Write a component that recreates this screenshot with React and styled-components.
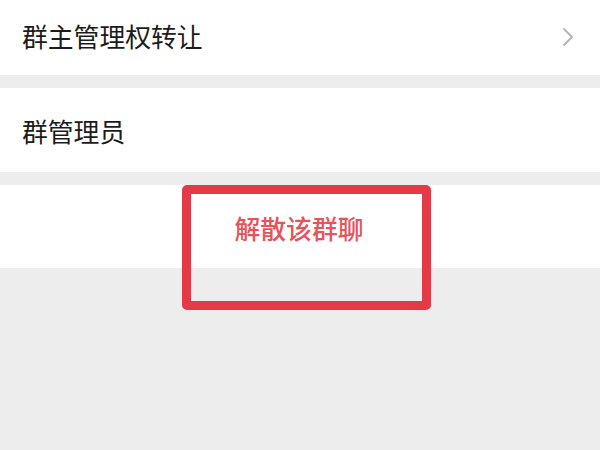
import React from "react";
import styled, { createGlobalStyle } from "styled-components";

const Global = createGlobalStyle`
  html, body { margin: 0; padding: 0; background: #ededed; }
  body { font-family: "Noto Sans CJK SC", "Noto Sans", sans-serif; }
`;

const Page = styled.div`
  position: relative;
  width: 600px;
  height: 450px;
  background: #ededed;
  display: flex;
  flex-direction: column;
  gap: 13px;
  overflow: hidden;
`;

const Row = styled.div`
  height: ${(p) => p.$h}px;
  background: #fff;
  display: flex;
  align-items: center;
  justify-content: ${(p) => (p.$center ? "center" : "space-between")};
  padding: 0 26px 0 22px;
  box-sizing: border-box;
`;

const Label = styled.span`
  font-size: 25.8px;
  color: #1b1b1b;
  line-height: 1;
  margin-top: ${(p) => p.$dy || 0}px;
`;

const Danger = styled.span`
  font-size: 25.8px;
  font-weight: 500;
  color: #e8525b;
  line-height: 1;
  margin-top: 2px;
  margin-left: 2px;
`;

const Highlight = styled.div`
  position: absolute;
  left: 182px;
  top: 185px;
  width: 249px;
  height: 125px;
  box-sizing: border-box;
  border: 9px solid #e43a47;
  border-radius: 5px;
`;

const Chevron = () => (
  <svg width="12" height="20" viewBox="0 0 12 20" style={{ marginTop: -2 }}>
    <path d="M2 2 L10 10 L2 18" fill="none" stroke="#b3b3b3" strokeWidth="1.8" strokeLinecap="round" strokeLinejoin="round" />
  </svg>
);

export default function App() {
  return (
    <>
      <Global />
      <Page>
        <Row $h={75}>
          <Label $dy={-3}>群主管理权转让</Label>
          <Chevron />
        </Row>
        <Row $h={84}>
          <Label $dy={1}>群管理员</Label>
        </Row>
        <Row $h={83} $center>
          <Danger>解散该群聊</Danger>
        </Row>
        <Highlight />
      </Page>
    </>
  );
}
